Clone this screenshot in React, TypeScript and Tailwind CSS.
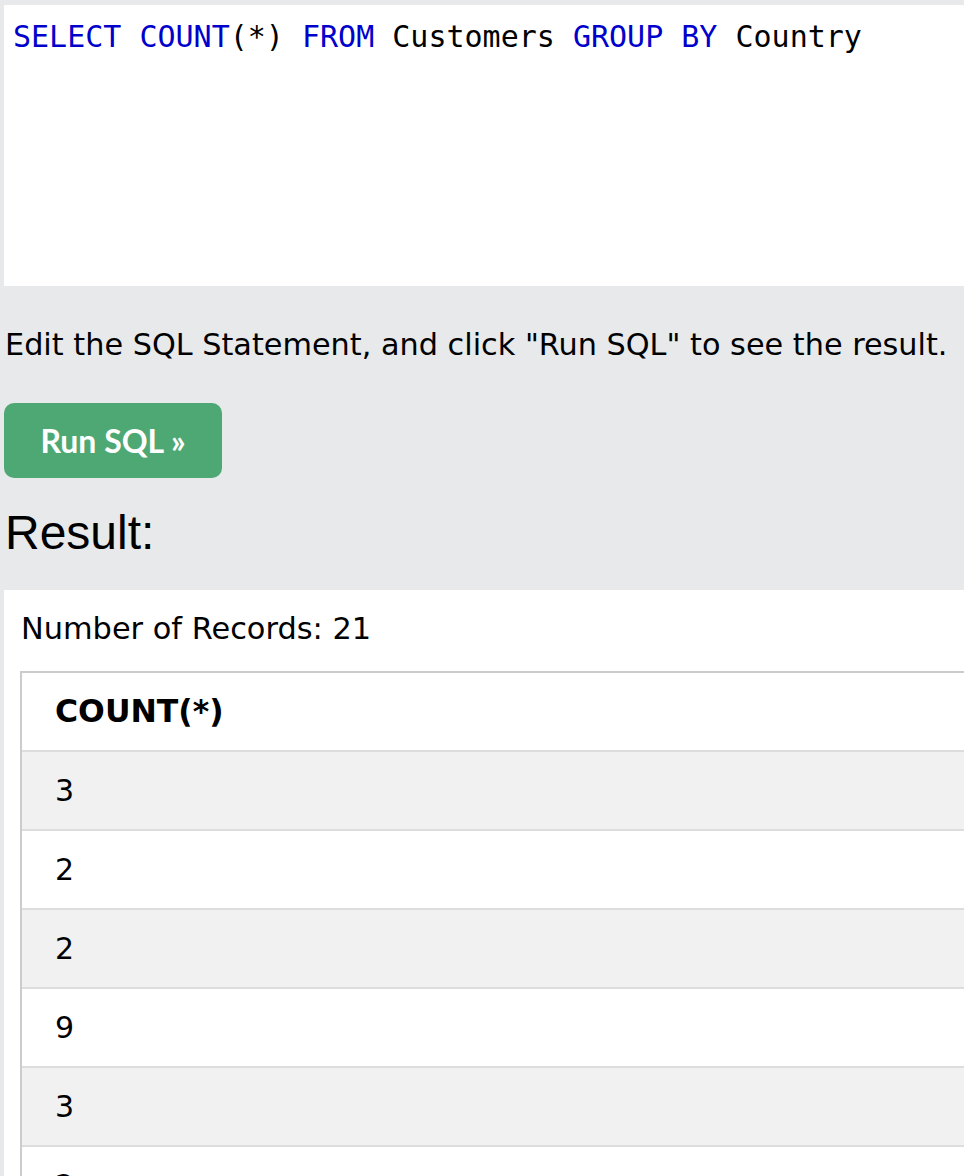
const counts = [3, 2, 2, 9, 3, 2, 2, 11, 11, 1, 3, 5, 1, 1, 2, 5, 2, 2, 7, 13, 4];

export default function App() {
  return (
    <div className="min-h-screen bg-[#e7e9eb] pt-[5px] pl-[4px] font-['DejaVu_Sans',Verdana,sans-serif] text-black">
      {/* SQL editor */}
      <div className="h-[281px] bg-white pl-[9px] pt-[14px] font-['DejaVu_Sans_Mono',monospace] text-[30px] leading-[36px] whitespace-pre">
        <span className="text-[#0000cd]">SELECT COUNT</span>
        <span>(*) </span>
        <span className="text-[#0000cd]">FROM</span>
        <span> Customers </span>
        <span className="text-[#0000cd]">GROUP BY</span>
        <span> Country</span>
      </div>

      {/* Controls */}
      <div className="pt-[41px] pb-[29px]">
        <p className="pl-px text-[30.3px] leading-[36px]">
          Edit the SQL Statement, and click "Run SQL" to see the result.
        </p>
        <button className="mt-[40px] flex h-[75px] w-[218px] items-center justify-center rounded-[10px] bg-[#4ea874] font-['Lato',sans-serif] text-[32px] font-bold text-white">
          Run SQL »
        </button>
        <h3 className="mt-[27px] pl-px font-['Liberation_Sans',Arial,sans-serif] text-[48px] leading-[56px]">
          Result:
        </h3>
      </div>

      {/* Result panel */}
      <div className="bg-white pt-[21px] pl-[16px]">
        <p className="pl-px text-[30.4px] leading-[36px]">Number of Records: 21</p>
        <div className="mt-[24px] border-l-2 border-t-2 border-[#cccccc]">
          <div className="flex h-[79px] items-center border-b-2 border-[#dddddd] bg-white pl-[33px] text-[31.5px] font-bold">
            COUNT(*)
          </div>
          {counts.map((c, i) => (
            <div
              key={i}
              className={`flex h-[79px] items-center border-b-2 border-[#dddddd] pl-[33px] text-[30px] ${
                i % 2 === 0 ? "bg-[#f1f1f1]" : "bg-white"
              }`}
            >
              {c}
            </div>
          ))}
        </div>
      </div>
    </div>
  );
}
